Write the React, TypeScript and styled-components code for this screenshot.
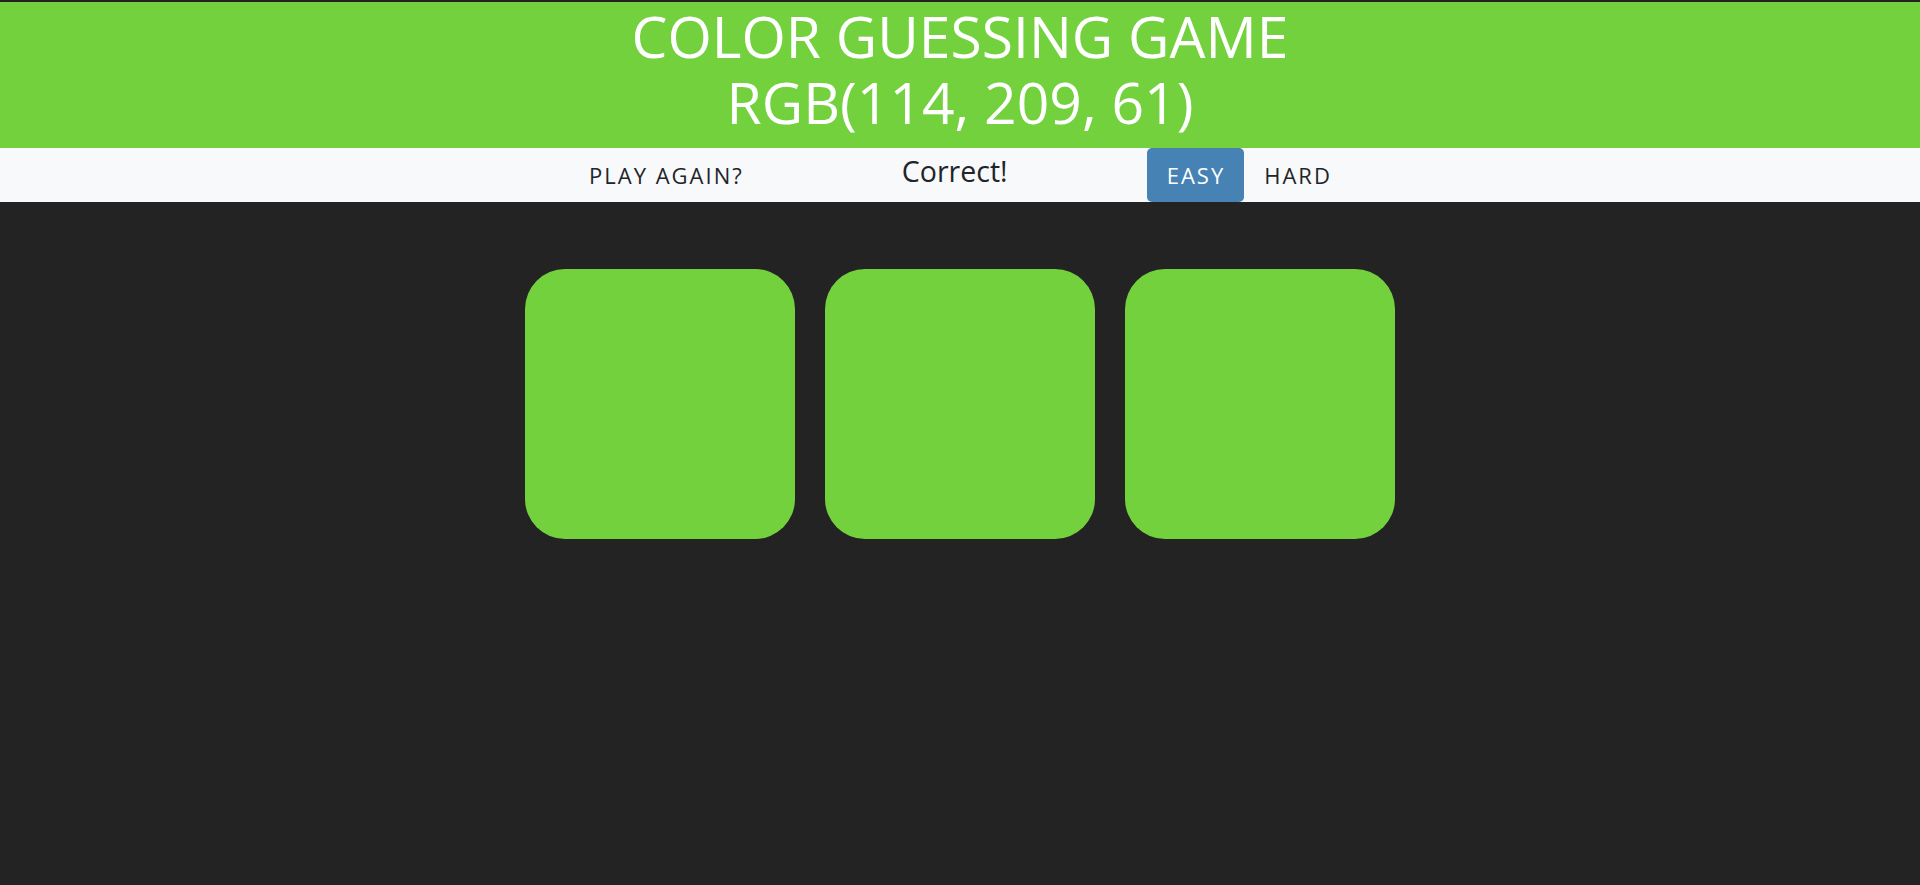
import React, { useState } from 'react';
import styled, { createGlobalStyle } from 'styled-components';

const target = 'rgb(114, 209, 61)';

const GlobalStyle = createGlobalStyle`
  html, body {
    margin: 0;
    padding: 0;
    background-color: #232323;
    font-family: "Segoe UI", "Open Sans", "Noto Sans", sans-serif;
  }
`;

const Page = styled.div`
  min-height: 885px;
  padding-top: 2px;
  box-sizing: border-box;
`;

const Header = styled.h1<{ $color: string }>`
  margin: 0;
  padding: 1px 0 13px;
  background-color: ${(p) => p.$color};
  color: #ffffff;
  text-align: center;
  text-transform: uppercase;
  font-weight: 400;
  font-size: 57px;
  line-height: 66px;
`;

const Stripe = styled.div`
  height: 54px;
  background-color: #f8f9fa;
  display: flex;
  justify-content: center;
  align-items: stretch;
  color: #212529;
`;

const NavButton = styled.button<{ $selected?: boolean }>`
  border: none;
  outline: none;
  margin: 0;
  padding: 0 19px 0 20px;
  height: 100%;
  font-family: inherit;
  font-size: 22px;
  letter-spacing: 2px;
  text-transform: uppercase;
  cursor: pointer;
  border-radius: 5px;
  background-color: ${(p) => (p.$selected ? '#4682b4' : 'transparent')};
  color: ${(p) => (p.$selected ? '#ffffff' : '#212529')};
`;

const Message = styled.span`
  width: 20%;
  text-align: center;
  font-size: 28.5px;
  line-height: 38px;
  padding-top: 4px;
`;

const Board = styled.div`
  display: flex;
  justify-content: center;
  gap: 30px;
  padding-top: 67px;
`;

const Square = styled.div<{ $color: string }>`
  width: 270px;
  height: 270px;
  border-radius: 40px;
  background-color: ${(p) => p.$color};
  cursor: pointer;
`;

const App = () => {
  const [mode, setMode] = useState<'easy' | 'hard'>('easy');
  const colors = [target, target, target];

  return (
    <Page>
      <GlobalStyle />
      <Header $color={target}>
        Color Guessing Game
        <br />
        {target}
      </Header>
      <Stripe>
        <NavButton>Play Again?</NavButton>
        <Message>Correct!</Message>
        <NavButton $selected={mode === 'easy'} onClick={() => setMode('easy')}>
          Easy
        </NavButton>
        <NavButton $selected={mode === 'hard'} onClick={() => setMode('hard')}>
          Hard
        </NavButton>
      </Stripe>
      <Board>
        {colors.map((c, i) => (
          <Square key={i} $color={c} />
        ))}
      </Board>
    </Page>
  );
};

export default App;
